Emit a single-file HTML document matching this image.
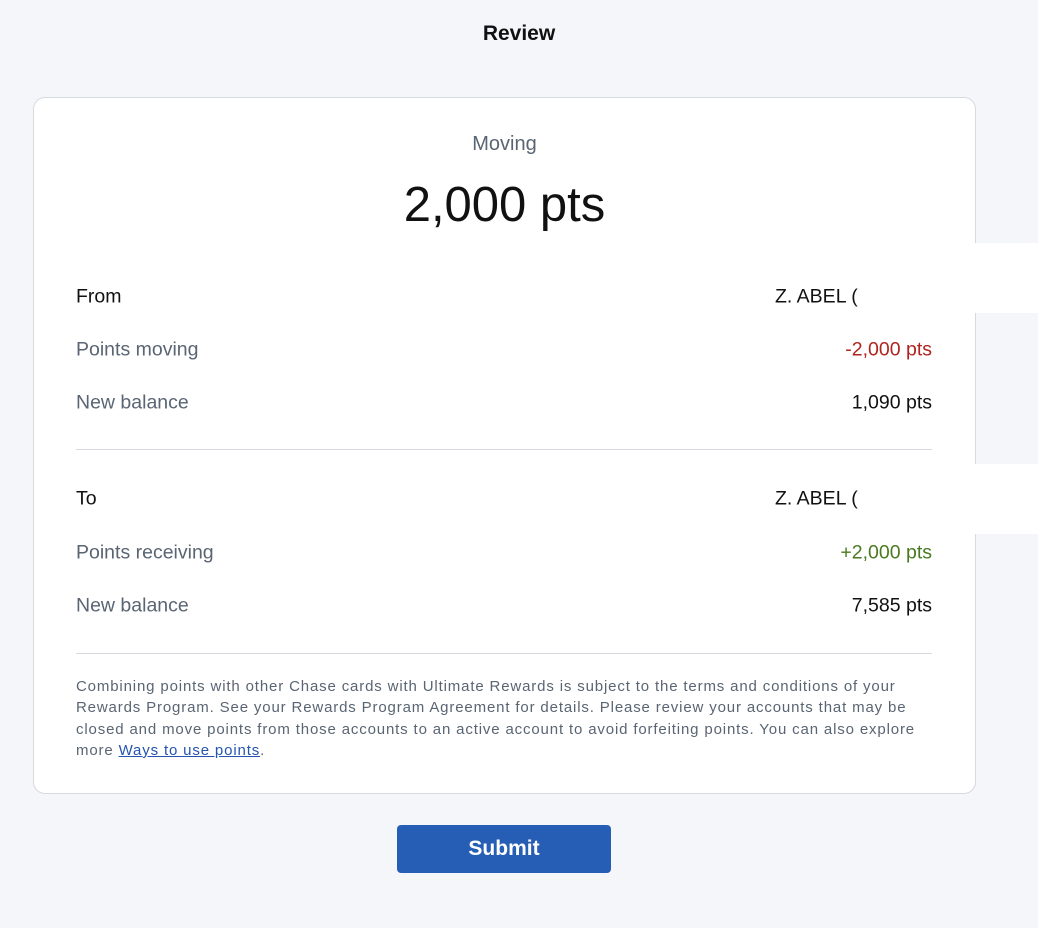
<!DOCTYPE html>
<html><head><style>
body{margin:0;width:1038px;height:928px;background:#f5f6fa;font-family:"Liberation Sans",sans-serif;position:relative;overflow:hidden;color:#111}
.t{position:absolute;white-space:nowrap}
.card{position:absolute;left:33px;top:97px;width:941px;height:695px;background:#fff;border:1px solid #d6d9de;border-radius:12px}
.l{left:76px;font-size:19.5px;color:#5a6573;transform:translateY(-50%)}
.r{right:106px;font-size:19.5px;text-align:right;transform:translateY(-50%)}
.hr{position:absolute;left:76px;width:856px;height:1px;background:#d6d9de}
.red{position:absolute;left:860px;width:178px;background:#fff}
</style></head><body>
<div class="t" style="left:0;width:1038px;text-align:center;top:22px;font-size:21px;font-weight:bold">Review</div>
<div class="card"></div>
<div class="t" style="left:33px;width:943px;text-align:center;top:133px;font-size:20px;color:#5a6573">Moving</div>
<div class="t" style="left:33px;width:943px;text-align:center;top:177px;font-size:49px">2,000 pts</div>
<div class="t l" style="top:297px;color:#111">From</div>
<div class="t" style="left:775px;top:297px;transform:translateY(-50%);font-size:19.5px">Z. ABEL (</div>
<div class="t l" style="top:350px">Points moving</div>
<div class="t r" style="top:350px;color:#b0241e">-2,000 pts</div>
<div class="t l" style="top:403px">New balance</div>
<div class="t r" style="top:403px">1,090 pts</div>
<div class="hr" style="top:449px"></div>
<div class="t l" style="top:499px;color:#111">To</div>
<div class="t" style="left:775px;top:499px;transform:translateY(-50%);font-size:19.5px">Z. ABEL (</div>
<div class="t l" style="top:553px">Points receiving</div>
<div class="t r" style="top:553px;color:#4a7a1f">+2,000 pts</div>
<div class="t l" style="top:606px">New balance</div>
<div class="t r" style="top:606px">7,585 pts</div>
<div class="hr" style="top:653px"></div>
<div style="position:absolute;left:76px;top:676px;width:900px;white-space:nowrap;font-size:15px;letter-spacing:0.85px;line-height:21.3px;color:#5a6573">Combining points with other Chase cards with Ultimate Rewards is subject to the terms and conditions of your<br>Rewards Program. See your Rewards Program Agreement for details. Please review your accounts that may be<br>closed and move points from those accounts to an active account to avoid forfeiting points. You can also explore<br>more <span style="color:#2454b0;text-decoration:underline">Ways to use points</span>.</div>
<div class="red" style="top:243px;height:70px"></div>
<div class="red" style="top:464px;height:70px"></div>
<div class="t" style="left:397px;top:825px;width:214px;height:48px;background:#275eb5;border-radius:4px;color:#fff;font-size:21px;font-weight:bold;text-align:center;line-height:48px">Submit</div>
</body></html>
